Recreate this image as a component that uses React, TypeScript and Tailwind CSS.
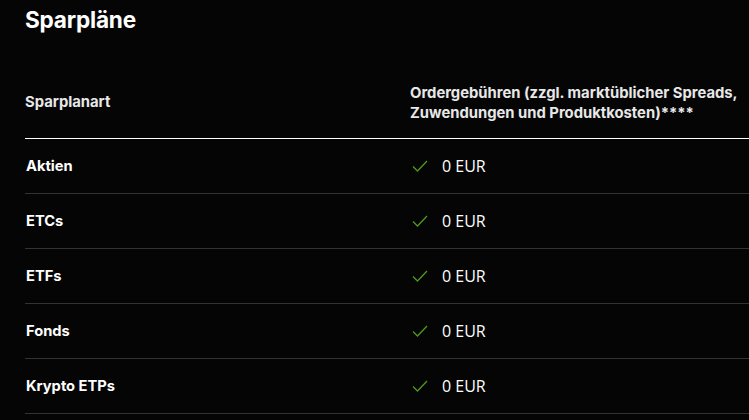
import React from "react";

const rows = ["Aktien", "ETCs", "ETFs", "Fonds", "Krypto ETPs"];

function Check() {
  return (
    <svg width="16" height="12" viewBox="0 0 16 12" fill="none" className="shrink-0">
      <path d="M1 6.5 L5.5 11 L15 1" stroke="#4f9a1c" strokeWidth="1.3" />
    </svg>
  );
}

export default function App() {
  return (
    <div className="min-h-screen bg-[#050505] text-white pl-[25px] overflow-hidden" style={{ fontFamily: "Inter, 'Liberation Sans', sans-serif" }}>
      <h1 className="text-[22.6px] leading-[28px] font-bold pt-[6px] tracking-[-0.2px]">Sparpläne</h1>
      <div className="mt-[49px] grid grid-cols-[385px_1fr] items-center border-b border-white pb-[15px] text-[14.8px] font-bold text-[#e8e8e8] leading-[20px]">
        <div className="pb-[2px]">Sparplanart</div>
        <div>
          Ordergebühren (zzgl. marktüblicher Spreads,
          <br />
          Zuwendungen und Produktkosten)****
        </div>
      </div>
      {rows.map((r) => (
        <div key={r} className="grid grid-cols-[385px_1fr] items-center h-[55px] border-b border-[#333333] text-[14.7px]">
          <div className="font-bold pl-px">{r}</div>
          <div className="flex items-center gap-[14px] pl-[2px]">
            <Check />
            <span className="text-[16px]" style={{ fontFamily: "'Open Sans', sans-serif" }}>0 EUR</span>
          </div>
        </div>
      ))}
    </div>
  );
}
